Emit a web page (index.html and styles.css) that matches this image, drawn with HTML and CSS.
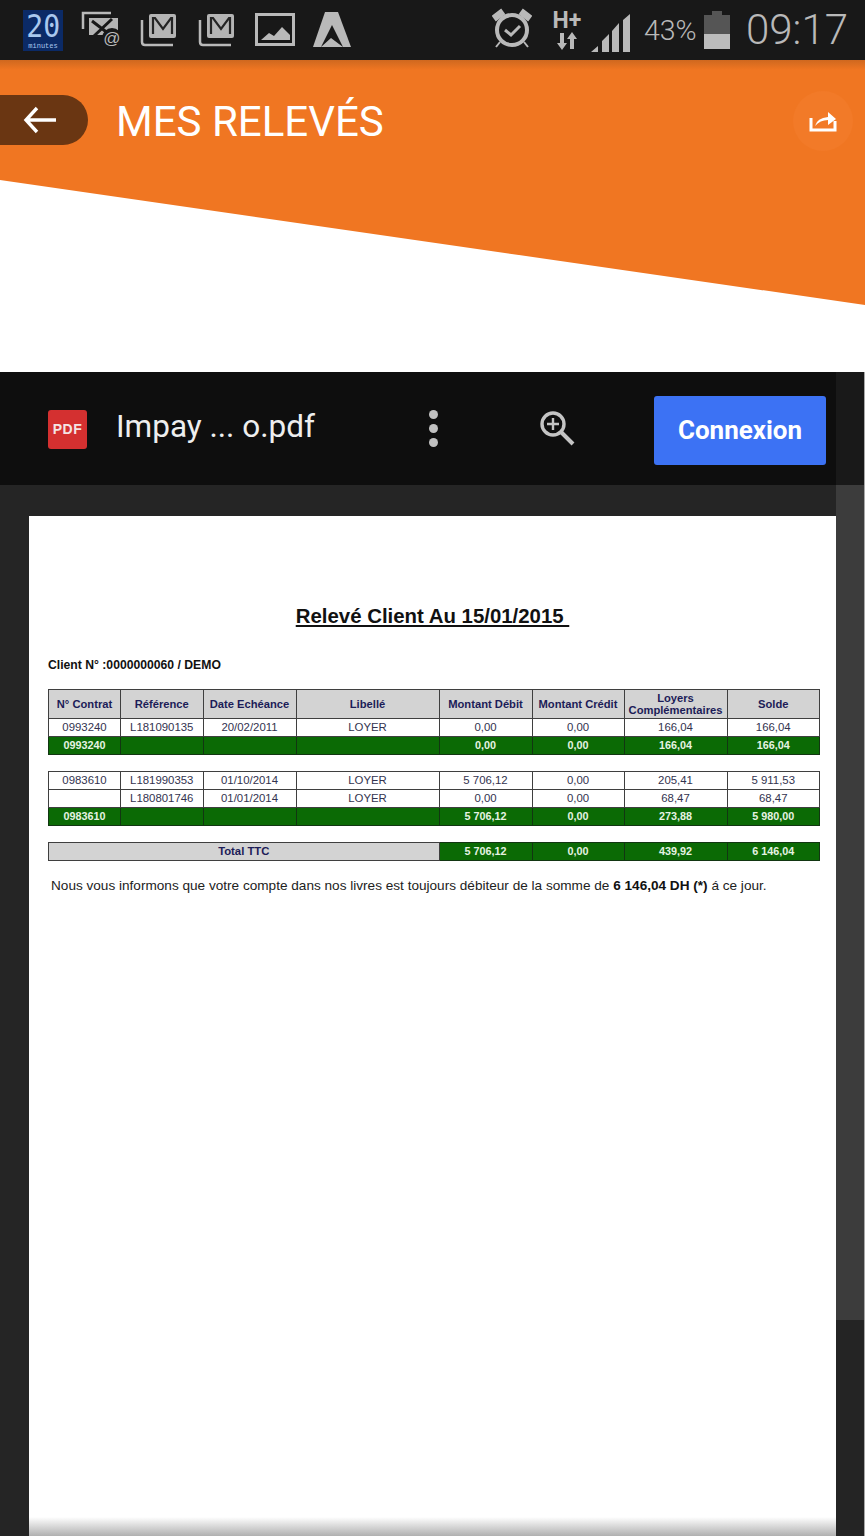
FILE: index.html
```html
<!DOCTYPE html>
<html>
<head>
   <meta charset="utf-8" />
   <title>Mes relevés</title>
   <link rel="stylesheet" href="styles.css">
</head>
<body>
   <div class="status">
      <div class="status-left">
         <div class="logo20"><span class="logo20-num">20</span><span class="logo20-sub">minutes</span></div>
         <svg class="ico" viewBox="0 0 40 50">
            <path d="M2 24V8h28" fill="none" stroke="#b9b9b9" stroke-width="2.5"/>
            <path d="M8 13h29v17H8z" fill="#b4b4b4"/>
            <path d="M11 16l17 13M31 14L13 31" stroke="#181818" stroke-width="3"/>
            <circle cx="31" cy="33" r="10" fill="#181818"/>
            <text x="31" y="39" class="at">@</text>
         </svg>
         <svg class="ico" viewBox="0 0 40 50">
            <path d="M3 15v22q0 3 3 3h28" fill="none" stroke="#b9b9b9" stroke-width="2.5"/>
            <rect x="10" y="9" width="27" height="24" rx="2" fill="#b4b4b4"/>
            <path d="M14 29V13h2l8 11 8-11h1v16" fill="none" stroke="#242424" stroke-width="2.2"/>
         </svg>
         <svg class="ico" viewBox="0 0 40 50">
            <path d="M3 15v22q0 3 3 3h28" fill="none" stroke="#b9b9b9" stroke-width="2.5"/>
            <rect x="10" y="9" width="27" height="24" rx="2" fill="#b4b4b4"/>
            <path d="M14 29V13h2l8 11 8-11h1v16" fill="none" stroke="#242424" stroke-width="2.2"/>
         </svg>
         <svg class="ico" viewBox="0 0 40 50">
            <rect x="1.5" y="9.5" width="37" height="30" fill="none" stroke="#b9b9b9" stroke-width="3"/>
            <path d="M6 35l8-7 5 3 8-9 8 8v5z" fill="#b9b9b9"/>
         </svg>
         <svg class="ico" viewBox="0 0 40 50">
            <path d="M12 7h13l13 35H0z" fill="#b9b9b9"/>
            <path d="M19 20L8 42l10-9 12 9z" fill="#181818"/>
         </svg>
      </div>
      <div class="status-right">
         <svg class="ico alarm" viewBox="0 0 40 50">
            <circle cx="20" cy="25" r="15" fill="none" stroke="#b9b9b9" stroke-width="4"/>
            <path d="M13 25l6 5 9-9" fill="none" stroke="#b9b9b9" stroke-width="3"/>
            <path d="M1 11l8-6 3 4-8 6zM39 11l-8-6-3 4 8 6zM8 37l-4 5M32 37l4 5" fill="#b9b9b9" stroke="#b9b9b9" stroke-width="2"/>
         </svg>
         <div class="net">
            <span class="net-h">H+</span>
            <svg class="net-arrows" viewBox="0 0 22 18">
               <path d="M6 18L1 11h3V1h4v10h3zM16 0l5 7h-3v10h-4V7h-3z" fill="#b9b9b9"/>
            </svg>
         </div>
         <svg class="signal" viewBox="0 0 40 40">
            <path d="M0 38l7-6v6zM11 38V27l7-7v18zM21 38V17l7-8v29zM32 38V6l7-6v38z" fill="#b9b9b9"/>
         </svg>
         <span class="pct">43%</span>
         <div class="batt"><div class="batt-nub"></div><div class="batt-empty"></div><div class="batt-full"></div></div>
         <span class="clock">09:17</span>
      </div>
   </div>

   <div class="hero">
      <div class="hero-bar">
         <div class="back">
            <svg viewBox="0 0 34 28" class="back-ico"><path d="M14 2L3 14l11 12M3 14h30" fill="none" stroke="#fff" stroke-width="3.4"/></svg>
         </div>
         <h1 class="hero-title">MES RELEVÉS</h1>
         <div class="share">
            <svg viewBox="0 0 28 22" class="share-ico">
               <path d="M2 8v12h24v-9" fill="none" stroke="#fff" stroke-width="3"/>
               <path d="M6 16q2-8 13-9V2l8 7-8 6v-5q-8 0-13 6z" fill="#fff"/>
            </svg>
         </div>
      </div>
      <svg class="wedge" viewBox="0 0 865 192" preserveAspectRatio="none"><path d="M0 0L865 125V0z" fill="#f07622"/></svg>
   </div>

   <div class="viewer">
      <div class="viewer-main">
         <div class="toolbar">
            <div class="pdf-badge">PDF</div>
            <span class="filename">Impay ... o.pdf</span>
            <div class="dots"><i></i><i></i><i></i></div>
            <svg class="zoom" viewBox="0 0 36 36">
               <circle cx="14" cy="14" r="11" fill="none" stroke="#c4c4c4" stroke-width="3.4"/>
               <path d="M22 22l12 12" stroke="#c4c4c4" stroke-width="4"/>
               <path d="M14 8v12M8 14h12" stroke="#c4c4c4" stroke-width="2.4"/>
            </svg>
            <button class="connect">Connexion</button>
         </div>
         <div class="canvas">
            <div class="page">
               <h2 class="doc-title">Relevé Client Au 15/01/2015&nbsp;</h2>
               <p class="client">Client N° :0000000060 / DEMO</p>

               <table class="stmt">
                  <colgroup><col class="c1"><col class="c2"><col class="c3"><col class="c4"><col class="c5"><col class="c6"><col class="c7"><col class="c8"></colgroup>
                  <tr class="head"><td>N° Contrat</td><td>Référence</td><td>Date Echéance</td><td>Libellé</td><td>Montant Débit</td><td>Montant Crédit</td><td>Loyers<br>Complémentaires</td><td>Solde</td></tr>
                  <tr><td>0993240</td><td>L181090135</td><td>20/02/2011</td><td>LOYER</td><td>0,00</td><td>0,00</td><td>166,04</td><td>166,04</td></tr>
                  <tr class="sum"><td>0993240</td><td></td><td></td><td></td><td>0,00</td><td>0,00</td><td>166,04</td><td>166,04</td></tr>
               </table>

               <table class="stmt">
                  <colgroup><col class="c1"><col class="c2"><col class="c3"><col class="c4"><col class="c5"><col class="c6"><col class="c7"><col class="c8"></colgroup>
                  <tr><td>0983610</td><td>L181990353</td><td>01/10/2014</td><td>LOYER</td><td>5 706,12</td><td>0,00</td><td>205,41</td><td>5 911,53</td></tr>
                  <tr><td></td><td>L180801746</td><td>01/01/2014</td><td>LOYER</td><td>0,00</td><td>0,00</td><td>68,47</td><td>68,47</td></tr>
                  <tr class="sum"><td>0983610</td><td></td><td></td><td></td><td>5 706,12</td><td>0,00</td><td>273,88</td><td>5 980,00</td></tr>
               </table>

               <table class="stmt">
                  <colgroup><col class="c1"><col class="c2"><col class="c3"><col class="c4"><col class="c5"><col class="c6"><col class="c7"><col class="c8"></colgroup>
                  <tr class="sum"><td colspan="4" class="total-label">Total TTC</td><td>5 706,12</td><td>0,00</td><td>439,92</td><td>6 146,04</td></tr>
               </table>

               <p class="note">Nous vous informons que votre compte dans nos livres est toujours débiteur de la somme de <b>6 146,04 DH (*)</b> á ce jour.</p>
            </div>
         </div>
      </div>
      <div class="scroll">
         <div class="scroll-top"></div>
         <div class="scroll-thumb"></div>
      </div>
   </div>
</body>
</html>
```

FILE: styles.css
```css
html, body { margin: 0; padding: 0; }
body { width: 865px; height: 1536px; overflow: hidden; background: #a8a8a8; font-family: "Liberation Sans", Arial, sans-serif; }

/* status bar */
.status { height: 60px; background: #181818; display: flex; justify-content: space-between; align-items: center; padding-left: 23px; box-sizing: border-box; }
.status-left { display: flex; gap: 18px; align-items: center; }
.status-right { display: flex; align-items: center; padding-right: 17px; }
.ico { width: 40px; height: 50px; display: block; }
.at { font: 17px "Liberation Sans", sans-serif; fill: #b9b9b9; text-anchor: middle; }
.logo20 { width: 40px; height: 41px; background: #0b2a66; display: flex; flex-direction: column; align-items: center; }
.logo20-num { font: 32px/32px "DejaVu Sans Mono", monospace; color: #a9c8ee; transform: scaleX(0.88); }
.logo20-sub { font: 7px/9px "Liberation Mono", monospace; color: #a9c8ee; }
.alarm { margin-right: 20px; }
.net { width: 30px; margin-right: 9px; display: flex; flex-direction: column; align-items: center; }
.net-h { font: bold 23px/22px "Roboto", sans-serif; color: #b9b9b9; }
.net-arrows { width: 22px; height: 18px; display: block; }
.signal { width: 40px; height: 40px; margin-right: 13px; margin-top: 8px; }
.pct { font: 300 28.5px/34px "Roboto", sans-serif; color: #b9b9b9; width: 52px; margin-right: 8px; margin-top: 2px; white-space: nowrap; }
.batt { width: 26px; }
.batt-nub { width: 10px; height: 4px; margin: 0 auto; background: #555; }
.batt-empty { height: 19px; background: #555; }
.batt-full { height: 15px; background: #bcbcbc; }
.clock { font: 300 42px/50px "Roboto", sans-serif; color: #b9b9b9; margin-left: 16px; }

/* orange header */
.hero { background: #fff; height: 312px; }
.hero-bar { height: 120px; background: linear-gradient(#cf681f, #f07622 10px); display: flex; align-items: center; padding-top: 1px; box-sizing: border-box; }
.back { width: 88px; height: 50px; background: #6a3612; border-radius: 0 25px 25px 0; display: flex; align-items: center; justify-content: center; padding-right: 8px; box-sizing: border-box; margin-top: -1px; }
.back-ico { width: 34px; height: 28px; }
.hero-title { margin: 3px 0 0 28px; font: 400 42px/50px "Roboto", sans-serif; color: #fff; flex: 1; }
.share { width: 60px; height: 60px; margin-right: 12px; border-radius: 50%; background: #f27a28; display: flex; align-items: center; justify-content: center; }
.share-ico { width: 28px; height: 22px; }
.wedge { display: block; width: 865px; height: 192px; }

/* pdf viewer */
.viewer { display: flex; width: 864px; height: 1164px; }
.viewer-main { width: 836px; display: flex; flex-direction: column; }
.toolbar { height: 113px; background: #0e0e0e; display: flex; align-items: center; padding-left: 48px; box-sizing: border-box; }
.pdf-badge { width: 39px; height: 39px; margin-top: 1px; background: #d43030; border-radius: 3px; color: #f4e4e4; font: bold 14px/39px "Liberation Sans", sans-serif; text-align: center; letter-spacing: 0.5px; }
.filename { margin-left: 29px; width: 298px; margin-top: -4px; font: 400 31.5px/40px "Roboto", sans-serif; color: #eee; }
.dots { width: 18px; margin-left: 10px; display: flex; flex-direction: column; align-items: center; gap: 5px; }
.dots i { width: 9px; height: 9px; background: #c0c0c0; border-radius: 50%; }
.zoom { width: 36px; height: 36px; margin-left: 97px; margin-top: -1px; }
.connect { width: 172px; height: 69px; margin-left: 79px; margin-top: 3px; padding: 0; background: #3c72f4; border: none; border-radius: 3px; color: #fff; font: 700 26px "Roboto", sans-serif; cursor: pointer; }
.canvas { flex: 1; background: #252525; padding: 31px 0 0 29px; }
.page { height: 1020px; box-sizing: border-box; padding: 88px 16px 0 19px; background: linear-gradient(#fff 1001px, #b0b0b0); }
.doc-title { margin: 0 0 29px; padding-right: 3px; font: bold 20.4px/24px "Liberation Sans", sans-serif; color: #111; text-align: center; text-decoration: underline; }
.client { margin: 0 0 16px; font: bold 12.2px/16px "Liberation Sans", sans-serif; color: #111; }

/* statement tables */
.stmt { width: 771px; table-layout: fixed; border-collapse: collapse; margin-bottom: 16px; color: #33334f; font-size: 11.4px; text-align: center; }
.stmt td { height: 17px; padding: 0; border: 1.5px solid #3f3f3f; line-height: 13px; }
.c1 { width: 72px; }
.c2 { width: 82.5px; }
.c3 { width: 93px; }
.c4 { width: 143px; }
.c5 { width: 93px; }
.c6 { width: 92px; }
.c7 { width: 103px; }
.c8 { width: 92.5px; }
.head td { height: 28px; background: #d3d3d3; color: #1c1c58; font-weight: bold; font-size: 11.2px; line-height: 12px; }
.sum td { background: #0b6a05; color: #e6f3e2; font-weight: bold; border-color: #123612; font-size: 10.8px; }
.sum td.total-label { background: #d3d3d3; color: #1c1c58; border-color: #3f3f3f; font-size: 11.3px; }
.note { margin: 1px 0 0 3px; font-size: 13.6px; line-height: 18px; color: #222; white-space: nowrap; }
.note b { color: #111; }

.scroll { width: 28px; background: #242424; }
.scroll-top { height: 113px; background: #191919; }
.scroll-thumb { height: 835px; background: #3c3c3c; }
```
